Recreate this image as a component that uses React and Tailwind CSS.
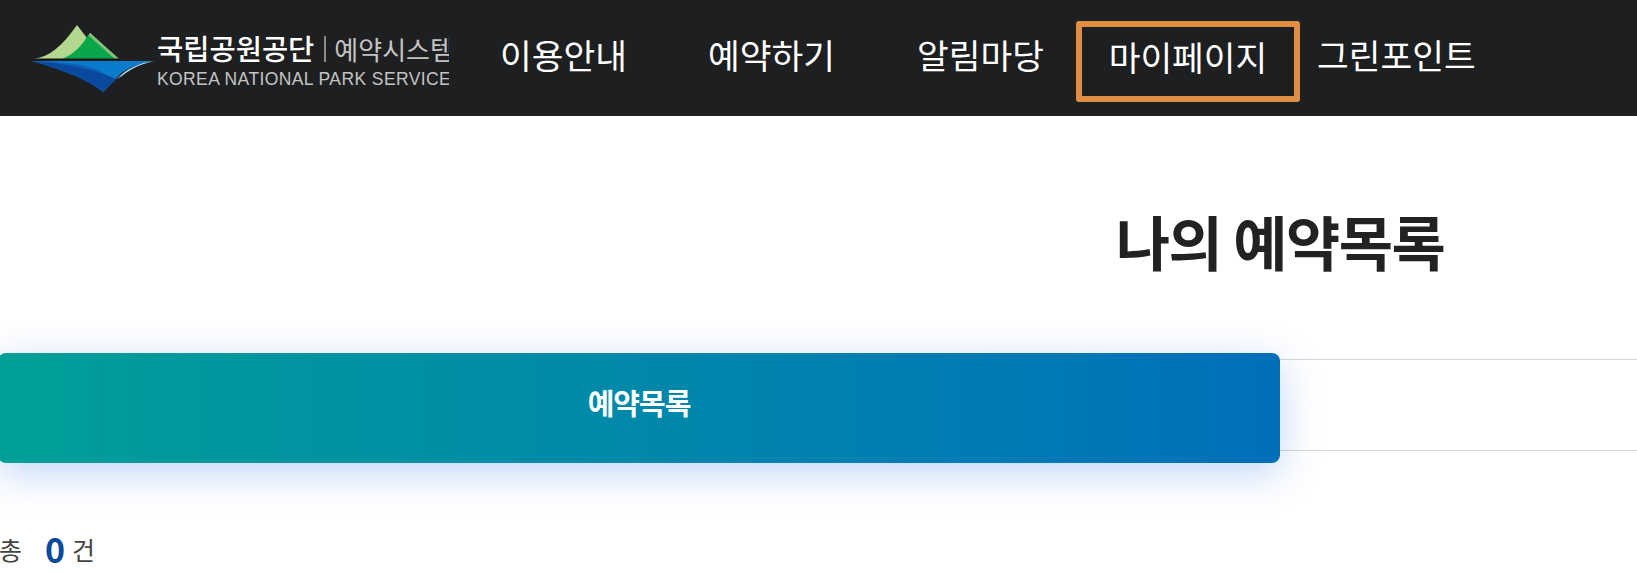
import React from "react";

const sans = "font-['Noto_Sans_CJK_KR','Noto_Sans',sans-serif]";

function LogoMark() {
  return (
    <svg viewBox="30 20 128 75" className="w-[128px] h-[75px] shrink-0 -ml-[1px]" aria-hidden="true">
      <path d="M33 58 C50 56 63 44 77 24 L87 37 L90 32 L119 58 Z" fill="#b3d78f" />
      <path d="M90 32 L119 58 L115 58 L88 35 Z" fill="#7fc477" />
      <path d="M62 58 C74 53 82 45 88 34 L115 58 Z" fill="#0aa64a" />
      <path d="M33 59 L119 59 L119 57.6 L33 57.6 Z" fill="#141414" />
      <path d="M32 60 L154 60 C135 63 122 69 116 78 L103 91 C88 78 60 68 32 60 Z" fill="#0b7bcb" />
      <path d="M32 60 C56 60.5 78 62 96 68 L114 78 L103 91 C88 78 60 68 32 60 Z" fill="#0d62b6" />
      <path d="M32 60 C62 62 92 67 116 78 L103 91 C88 78 60 68 32 60 Z" fill="#0a4a9e" />
      <path d="M154 60 C139 62 127 67 117 78 L122 75 C130 68 141 63 154 60 Z" fill="#a9dcf2" />
    </svg>
  );
}

function Logo() {
  return (
    <div className={`flex items-center w-[419px] ml-[31px] h-[75px] overflow-hidden shrink-0 ${sans}`}>
      <LogoMark />
      <div className="flex flex-col w-[292px] shrink-0 -ml-[1px] overflow-hidden whitespace-nowrap">
        <div className="flex items-center h-[34px] mt-[4px]">
          <span className="text-[28.5px] leading-none font-medium text-white">국립공원공단</span>
          <span className="w-[2px] h-[26px] bg-[#8a8a8a] ml-[10px] mr-[8px] shrink-0" />
          <span className="text-[26px] leading-none text-[#c4c4c4]">예약시스템</span>
        </div>
        <span className="text-[17.5px] leading-[20px] mt-[3px] text-[#c4c4c4] font-['Liberation_Sans',sans-serif] tracking-[0.4px]">
          KOREA NATIONAL PARK SERVICE
        </span>
      </div>
    </div>
  );
}

export default function App() {
  return (
    <div className={`w-full h-[573px] overflow-hidden bg-white ${sans}`}>
      <header className="flex items-center h-[116px] bg-[#1e1f21] text-white text-[34.5px] leading-none">
        <Logo />
        <nav className="flex items-center ml-[50px]">
          <a className="w-[127px] pb-[8px] text-center whitespace-nowrap">이용안내</a>
          <a className="w-[127px] ml-[81px] pb-[8px] text-center whitespace-nowrap">예약하기</a>
          <a className="w-[127px] ml-[82px] pb-[8px] text-center whitespace-nowrap">알림마당</a>
          <a className="flex items-center justify-center w-[224px] h-[81px] ml-[32px] mt-[6px] pb-[10px] border-[6px] border-[#e08e45] rounded-[3px] whitespace-nowrap">
            마이페이지
          </a>
          <a className="ml-[17px] pb-[8px] whitespace-nowrap">그린포인트</a>
        </nav>
      </header>

      <main className="w-[2564px] -ml-[2px]">
        <h1 className="pt-[90px] text-center text-[59px] leading-[70px] font-bold text-[#222222] tracking-[-1.5px]">
          나의 예약목록
        </h1>
        <div className="grid grid-cols-2 mt-[77px] items-center">
          <div className="relative flex items-center justify-center h-[110px] pb-[10px] rounded-[8px] bg-gradient-to-r from-[#009f97] to-[#006fba] shadow-[0_10px_40px_rgba(0,90,220,0.25)] text-white text-[29px] font-bold tracking-[-1px]">
            예약목록
          </div>
          <div className="h-[92px] -mt-[6px] border-y border-[#d8d8d8]" />
        </div>
        <p className="mt-[66px] flex items-center h-[40px] text-[25px] text-[#444444] leading-none whitespace-nowrap">
          <span className="ml-[1px]">총</span>
          <span className="ml-[23px] text-[34px] font-bold text-[#0a4a9c]">0</span>
          <span className="ml-[7px]">건</span>
        </p>
      </main>
    </div>
  );
}
